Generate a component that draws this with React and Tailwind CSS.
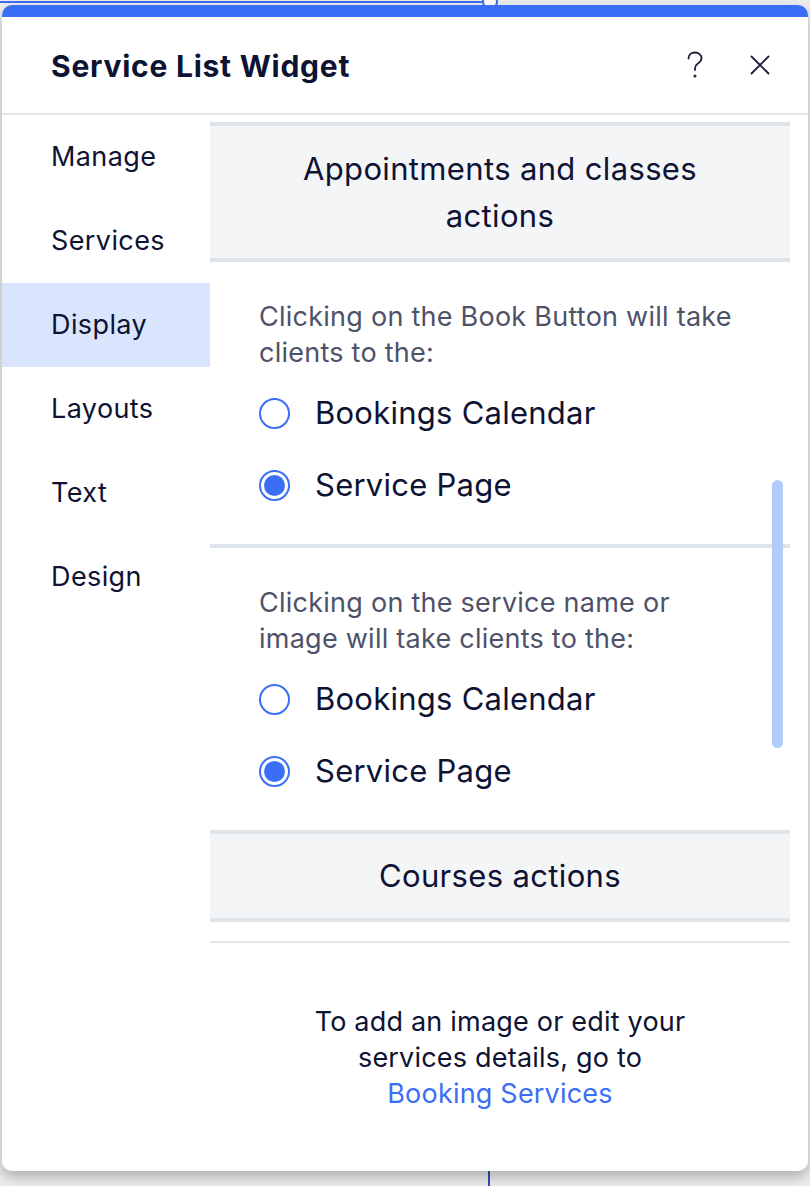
import React from 'react'

const navItems = ["Manage", "Services", "Display", "Layouts", "Text", "Design"];

function Radio({ checked, label }) {
  return (
    <div className="flex items-center h-[72px] gap-[25px]">
      <span className="w-[31px] h-[31px] rounded-full border-2 border-[#3b6ef6] flex items-center justify-center bg-white">
        {checked && <span className="w-[21px] h-[21px] rounded-full bg-[#3b6ef6]" />}
      </span>
      <span className="text-[31px] text-[#0e1233] tracking-[0.25px]">{label}</span>
    </div>
  );
}

function RadioGroup({ text, selected }) {
  return (
    <div className="pt-[37px] pb-[23px] pl-[49px] pr-[53px]">
      <p className="text-[27px] leading-[36px] tracking-[0.25px] text-[#4e5269] mb-[6px]">{text}</p>
      <Radio label="Bookings Calendar" checked={selected === "calendar"} />
      <Radio label="Service Page" checked={selected === "page"} />
    </div>
  );
}

function App() {
  return (
    <div className="relative w-[810px] h-[1186px] bg-[#eeeeee] overflow-hidden pt-[5px] px-[2px]" style={{ fontFamily: "Inter, 'Noto Sans', sans-serif" }}>
      {/* canvas bits behind the panel */}
      <div className="absolute top-[1px] left-0 w-[482px] h-[2px] bg-[#3b6ef6]" />
      <div className="absolute -top-[6px] left-[482px] w-[16px] h-[16px] rounded-full border-2 border-[#3b6ef6] bg-white" />
      <div className="absolute bottom-0 left-[488px] w-[2px] h-[16px] bg-[#2e4fb8]" />

      <div className="relative h-[1166px] bg-white rounded-[10px] overflow-hidden shadow-[0_6px_14px_rgba(0,0,0,0.28)] flex flex-col">
        <div className="h-[12px] bg-[#3b6ef6] shrink-0" />

        <header className="h-[98px] shrink-0 flex items-center justify-between pl-[49px] pr-[38px] border-b-2 border-[#e3e6ec]">
          <h1 className="text-[30px] font-bold text-[#0e1233] tracking-[0.75px] pt-[2px]">Service List Widget</h1>
          <div className="flex items-center gap-[46px]">
            <svg width="18" height="28" viewBox="0 0 18 28" fill="none" stroke="#1a1d3a" strokeWidth="1.8" strokeLinecap="round">
              <path d="M2.5 7.5 C2.5 3.5 5.5 1.5 9 1.5 C12.5 1.5 15.5 3.8 15.5 7.2 C15.5 10 13.6 11.4 11.6 12.8 C9.8 14 9 15.2 9 17.5 V19" />
              <circle cx="9" cy="25" r="0.6" fill="#1a1d3a" />
            </svg>
            <svg width="20" height="20" viewBox="0 0 20 20" fill="none" stroke="#1a1d3a" strokeWidth="1.8" strokeLinecap="round">
              <path d="M1.5 1.5 L18.5 18.5 M18.5 1.5 L1.5 18.5" />
            </svg>
          </div>
        </header>

        <div className="relative flex flex-1 min-h-0">
          <nav className="w-[208px] shrink-0">
            {navItems.map((item) => (
              <div
                key={item}
                className={`h-[84px] flex items-center pl-[49px] text-[27px] tracking-[0.4px] text-[#0e1233] ${
                  item === "Display" ? "bg-[#d9e5fc]" : ""
                }`}
              >
                {item}
              </div>
            ))}
          </nav>

          <div className="w-[580px] pt-[7px]">
            <div className="border-y-4 border-[#dfe3ea] bg-[#f4f5f7] py-[19px] text-center text-[31px] leading-[47px] tracking-[0.35px] text-[#0e1233] px-[80px]">
              Appointments and classes actions
            </div>

            <RadioGroup text="Clicking on the Book Button will take clients to the:" selected="page" />
            <div className="h-[4px] bg-[#dfe3ea]" />
            <RadioGroup text="Clicking on the service name or image will take clients to the:" selected="page" />

            <div className="border-y-4 border-[#dfe3ea] bg-[#f4f5f7] h-[92px] flex items-center justify-center text-[31px] tracking-[0.35px] text-[#0e1233]">
              Courses actions
            </div>

            <div className="mt-[19px] h-[2px] bg-[#e3e6ec]" />

            <p className="pt-[61px] text-center text-[27px] leading-[36px] tracking-[0.2px] text-[#0e1233] px-[100px]">
              To add an image or edit your services details, go to
              <a className="block text-[#3b6ef6]">Booking Services</a>
            </p>
          </div>

          <div className="absolute left-[770px] top-[365px] w-[11px] h-[268px] rounded-full bg-[#b2cbf8]" />
        </div>
      </div>
    </div>
  );
}

export default App
